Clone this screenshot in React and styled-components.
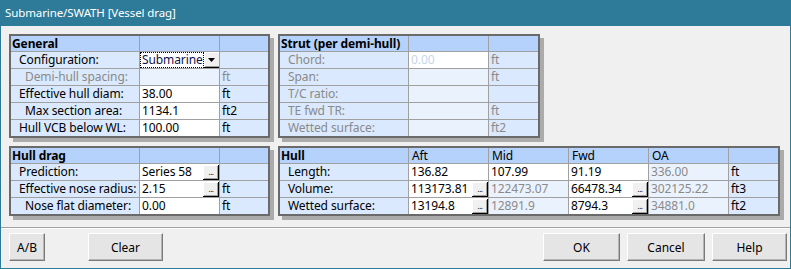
import React from "react";
import styled, { createGlobalStyle } from "styled-components";

const Global = createGlobalStyle`
  html, body { margin: 0; padding: 0; background: #ffffff; }
  body { font-family: "Noto Sans", "Open Sans", sans-serif; font-size: 12px; }
  * { box-sizing: border-box; }
`;

const C = {
  teal: "#2d7b99",
  face: "#f0f0f0",
  head: "#b4d2fb",
  label: "#dae9fd",
  dis: "#eaf3fd",
  line: "#a0a0a0",
  frame: "#6a6a6a",
  shadow: "#ababab",
  grey: "#8a8a8a",
};

const Window = styled.div`
  width: 791px;
  height: 269px;
  display: flex;
  flex-direction: column;
  background: ${C.face};
  border: 1px solid ${C.teal};
  border-top: none;
`;

const TitleBar = styled.div`
  height: 26px;
  margin: 0 -1px;
  background: ${C.teal};
  color: #ffffff;
  font-size: 11.5px;
  letter-spacing: -0.1px;
  line-height: 26px;
  padding-left: 5px;
  flex: none;
`;

const Body = styled.div`
  flex: 1;
  display: flex;
  flex-direction: column;
  padding: 8px 8px 0 8px;
`;

const PanelRow = styled.div`
  display: flex;
  gap: 8px;
  margin-bottom: 8px;
  align-items: flex-start;
`;

const Panel = styled.div`
  display: grid;
  grid-template-columns: ${(p) => p.$cols};
  grid-template-rows: 15px;
  grid-auto-rows: 16px;
  gap: 1px;
  background: ${C.line};
  border: 2px solid ${C.frame};
  box-shadow: 4px 4px 0 0 ${C.shadow};
`;

const bgFor = (k) =>
  k === "head" ? C.head : k === "input" ? "#ffffff" : k === "dis" ? C.dis : C.label;

const Cell = styled.div`
  position: relative;
  background: ${(p) => bgFor(p.$kind)};
  color: ${(p) => (p.$muted ? C.grey : p.$faint ? "#c6d6ec" : "#000")};
  font-weight: ${(p) => (p.$bold ? 700 : 400)};
  padding-left: ${(p) => p.$pad ?? 2}px;
  line-height: ${(p) => (p.$kind === "head" ? 15 : 16)}px;
  letter-spacing: -0.1px;
  white-space: nowrap;
  overflow: hidden;
`;

const EllipsisBtn = styled.div`
  position: absolute;
  right: 0;
  bottom: 0;
  width: 16px;
  height: 15px;
  background: ${C.face};
  box-shadow: inset -1px -1px 0 #000, inset 1px 1px 0 #fff, inset -2px -2px 0 ${C.line};
  font-size: 8px;
  line-height: 14px;
  text-align: center;
  color: #000;
  letter-spacing: -0.5px;
  padding-left: 0;
`;

const Combo = styled.div`
  display: flex;
  height: 100%;
  margin-left: -2px;
  background: #fff;
`;

const ComboText = styled.div`
  flex: 1;
  border: 1px dotted #000;
  padding-left: 1px;
  line-height: 14px;
  color: #10104a;
`;

const ComboBtn = styled.div`
  width: 18px;
  flex: none;
  background: ${C.face};
  box-shadow: inset -1px -1px 0 #000, inset 1px 1px 0 #fff, inset -2px -2px 0 ${C.line};
  display: flex;
  align-items: center;
  justify-content: center;
  padding-right: 1px;
`;

const Separator = styled.div`
  margin-top: 3px;
  margin-left: -8px;
  margin-right: -8px;
  border-top: 1px solid ${C.line};
  border-bottom: 1px solid #fff;
`;

const ButtonBar = styled.div`
  display: flex;
  align-items: center;
  margin-top: 4px;
`;

const Group = styled.div`
  display: flex;
  gap: ${(p) => p.$gap}px;
  margin-left: ${(p) => p.$ml ?? 0}px;
`;

const Button = styled.div`
  width: ${(p) => p.$w}px;
  height: 28px;
  background: #e5e5e5;
  border: 1px solid;
  border-color: #ffffff #7a7a7a #7a7a7a #ffffff;
  box-shadow: inset -1px -1px 0 #b5b5b5;
  display: flex;
  align-items: center;
  justify-content: center;
  font-size: 12px;
  color: #000;
`;

const Label = ({ children, sub, muted }) => (
  <Cell $kind="label" $pad={sub ? 14 : 8} $muted={muted}>
    {children}
  </Cell>
);

const Val = ({ children, kind = "input", btn, muted, faint }) => (
  <Cell $kind={kind} $muted={muted} $faint={faint}>
    {children}
    {btn && <EllipsisBtn>...</EllipsisBtn>}
  </Cell>
);

const Unit = ({ children, muted }) => (
  <Cell $kind="label" $pad={2} $muted={muted}>
    {children}
  </Cell>
);

const Head = ({ children, bold }) => (
  <Cell $kind="head" $bold={bold} $pad={bold ? 1 : 3}>
    {children}
  </Cell>
);

export default function App() {
  return (
    <>
      <Global />
      <Window>
        <TitleBar>Submarine/SWATH [Vessel drag]</TitleBar>
        <Body>
          <PanelRow>
            <Panel $cols="128px 79px 48px">
              <Head bold>General</Head>
              <Head />
              <Head />
              <Label>Configuration:</Label>
              <Cell $kind="input">
                <Combo>
                  <ComboText>Submarine</ComboText>
                  <ComboBtn>
                    <svg width="8" height="4" viewBox="0 0 8 4">
                      <path d="M0 0H7L3.5 4Z" fill="#000" />
                    </svg>
                  </ComboBtn>
                </Combo>
              </Cell>
              <Unit />
              <Label sub muted>Demi-hull spacing:</Label>
              <Val kind="dis" />
              <Unit muted>ft</Unit>
              <Label>Effective hull diam:</Label>
              <Val>38.00</Val>
              <Unit>ft</Unit>
              <Label sub>Max section area:</Label>
              <Val>1134.1</Val>
              <Unit>ft2</Unit>
              <Label>Hull VCB below WL:</Label>
              <Val>100.00</Val>
              <Unit>ft</Unit>
            </Panel>
            <Panel $cols="128px 79px 49px">
              <Head bold>Strut (per demi-hull)</Head>
              <Head />
              <Head />
              <Label muted>Chord:</Label>
              <Val faint>0.00</Val>
              <Unit muted>ft</Unit>
              <Label muted>Span:</Label>
              <Val kind="dis" />
              <Unit muted>ft</Unit>
              <Label muted>T/C ratio:</Label>
              <Val kind="dis" />
              <Unit muted />
              <Label muted>TE fwd TR:</Label>
              <Val kind="dis" />
              <Unit muted>ft</Unit>
              <Label muted>Wetted surface:</Label>
              <Val kind="dis" />
              <Unit muted>ft2</Unit>
            </Panel>
          </PanelRow>
          <PanelRow>
            <Panel $cols="128px 79px 48px">
              <Head bold>Hull drag</Head>
              <Head />
              <Head />
              <Label>Prediction:</Label>
              <Val btn>Series 58</Val>
              <Unit />
              <Label>Effective nose radius:</Label>
              <Val btn>2.15</Val>
              <Unit>ft</Unit>
              <Label sub>Nose flat diameter:</Label>
              <Val>0.00</Val>
              <Unit>ft</Unit>
            </Panel>
            <Panel $cols="128px 79px 79px 79px 79px 49px">
              <Head bold>Hull</Head>
              <Head>Aft</Head>
              <Head>Mid</Head>
              <Head>Fwd</Head>
              <Head>OA</Head>
              <Head />
              <Label>Length:</Label>
              <Val>136.82</Val>
              <Val>107.99</Val>
              <Val>91.19</Val>
              <Val kind="dis" muted>336.00</Val>
              <Unit>ft</Unit>
              <Label>Volume:</Label>
              <Val btn>113173.81</Val>
              <Val kind="dis" muted>122473.07</Val>
              <Val btn>66478.34</Val>
              <Val kind="dis" muted>302125.22</Val>
              <Unit>ft3</Unit>
              <Label>Wetted surface:</Label>
              <Val btn>13194.8</Val>
              <Val kind="dis" muted>12891.9</Val>
              <Val btn>8794.3</Val>
              <Val kind="dis" muted>34881.0</Val>
              <Unit>ft2</Unit>
            </Panel>
          </PanelRow>
          <Separator />
          <ButtonBar>
            <Group $gap={43}>
              <Button $w={36}>A/B</Button>
              <Button $w={75}>Clear</Button>
            </Group>
            <Group $gap={7} $ml={380}>
              <Button $w={77}>OK</Button>
              <Button $w={78}>Cancel</Button>
              <Button $w={75}>Help</Button>
            </Group>
          </ButtonBar>
        </Body>
      </Window>
    </>
  );
}
